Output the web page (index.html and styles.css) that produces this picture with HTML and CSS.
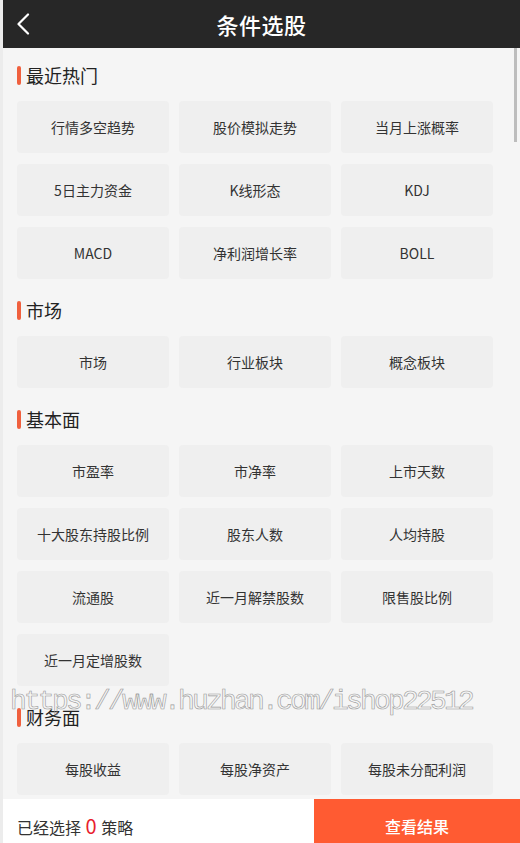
FILE: index.html
```html
<!DOCTYPE html>
<html>

	<head lang="en">
		<meta charset="UTF-8">
		<title>条件选股</title>
		<meta name="viewport" content="width=device-width,initial-scale=1,minimum-scale=1,maximum-scale=1,user-scalable=no" />
		<link rel="stylesheet" href="styles.css">
	</head>

	<body>
		<div class="page">
			<!-- 顶部标题栏 -->
			<div class="header">
				<a class="back" href="javascript:;">
					<svg width="14" height="22" viewBox="0 0 14 22"><path d="M12 1.5 L2.5 11 L12 20.5" fill="none" stroke="#fff" stroke-width="2.2" stroke-linecap="round" stroke-linejoin="round"/></svg>
				</a>
				<div class="title">条件选股</div>
			</div>

			<!-- 条件列表 -->
			<div class="content">
				<div class="section first">
					<div class="sec-title">最近热门</div>
					<div class="item-grid">
						<div class="item">行情多空趋势</div>
						<div class="item">股价模拟走势</div>
						<div class="item">当月上涨概率</div>
						<div class="item">5日主力资金</div>
						<div class="item">K线形态</div>
						<div class="item">KDJ</div>
						<div class="item">MACD</div>
						<div class="item">净利润增长率</div>
						<div class="item">BOLL</div>
					</div>
				</div>

				<div class="section">
					<div class="sec-title">市场</div>
					<div class="item-grid">
						<div class="item">市场</div>
						<div class="item">行业板块</div>
						<div class="item">概念板块</div>
					</div>
				</div>

				<div class="section">
					<div class="sec-title">基本面</div>
					<div class="item-grid">
						<div class="item">市盈率</div>
						<div class="item">市净率</div>
						<div class="item">上市天数</div>
						<div class="item">十大股东持股比例</div>
						<div class="item">股东人数</div>
						<div class="item">人均持股</div>
						<div class="item">流通股</div>
						<div class="item">近一月解禁股数</div>
						<div class="item">限售股比例</div>
						<div class="item">近一月定增股数</div>
					</div>
				</div>

				<div class="section">
					<div class="sec-title">财务面</div>
					<div class="item-grid">
						<div class="item">每股收益</div>
						<div class="item">每股净资产</div>
						<div class="item">每股未分配利润</div>
						<div class="item">每股公积金</div>
						<div class="item">每股现金流</div>
						<div class="item">营业收入</div>
						<div class="item">净利润</div>
						<div class="item">毛利率</div>
						<div class="item">净资产收益率</div>
					</div>
				</div>

				<div class="section">
					<div class="sec-title">技术面</div>
					<div class="item-grid">
						<div class="item">MACD</div>
						<div class="item">KDJ</div>
						<div class="item">BOLL</div>
						<div class="item">RSI</div>
						<div class="item">WR</div>
						<div class="item">CCI</div>
						<div class="item">均线</div>
						<div class="item">成交量</div>
						<div class="item">换手率</div>
					</div>
				</div>

				<div class="section">
					<div class="sec-title">资金面</div>
					<div class="item-grid">
						<div class="item">5日主力资金</div>
						<div class="item">主力净流入</div>
						<div class="item">北向资金</div>
						<div class="item">融资余额</div>
						<div class="item">大单净额</div>
						<div class="item">龙虎榜</div>
					</div>
				</div>
			</div>

			<!-- 滚动条 -->
			<div class="scroll-thumb"></div>

			<!-- 底部操作栏 -->
			<div class="footer">
				<div class="selected">已经选择 <span class="num">0</span> 策略</div>
				<div class="btn-result">查看结果</div>
			</div>

			<div class="watermark">https://www.huzhan.com/ishop22512</div>
		</div>
	</body>

</html>
```

FILE: styles.css
```css
*{
	padding: 0;
	margin: 0;
	box-sizing: border-box;
}
html,body{
	height: 100%;
	overflow: hidden;
}
body{
	font-family: "Noto Sans CJK SC", "Liberation Sans", sans-serif;
	color: #333;
	background: #ececec;
}
a{
	text-decoration: none;
}

.page{
	position: relative;
	height: 100%;
	margin-left: 3px;
	display: flex;
	flex-direction: column;
	background: #f5f5f5;
}

/* 标题栏 */
.header{
	height: 48px;
	flex-shrink: 0;
	background: #272727;
	display: flex;
	align-items: center;
	justify-content: center;
	position: relative;
}
.header .back{
	position: absolute;
	left: 13px;
	top: 13px;
	display: block;
	width: 14px;
	height: 22px;
}
.header .back svg{
	display: block;
}
.header .title{
	font-size: 22px;
	font-weight: 500;
	color: #fff;
	letter-spacing: 0.5px;
}

/* 列表区 */
.content{
	flex: 1;
	overflow-y: auto;
	padding: 0 0 10px 14px;
}
.content::-webkit-scrollbar{
	display: none;
}
.scroll-thumb{
	position: absolute;
	right: 3px;
	top: 48px;
	width: 3px;
	height: 94px;
	background: #bdbdbd;
}

.section{
	padding-top: 18px;
}
.section.first{
	padding-top: 14px;
}
.sec-title{
	position: relative;
	height: 26px;
	line-height: 26px;
	font-size: 18px;
	color: #222;
	padding-left: 9px;
	margin-bottom: 13px;
}
.sec-title:before{
	content: '';
	position: absolute;
	left: 0;
	top: 4px;
	width: 4px;
	height: 19px;
	border-radius: 2px;
	background: #f0603e;
}

.item-grid{
	display: grid;
	grid-template-columns: repeat(3, 152px);
	gap: 11px 10px;
}
.item{
	height: 52px;
	line-height: 52px;
	text-align: center;
	font-size: 14px;
	color: #333;
	background: #efefef;
	border-radius: 4px;
	white-space: nowrap;
	overflow: hidden;
	text-overflow: ellipsis;
}

/* 底部栏 */
.footer{
	height: 44px;
	flex-shrink: 0;
	display: flex;
	background: #fff;
	position: relative;
	z-index: 1;
}
.footer .selected{
	flex: 1;
	padding: 10px 0 0 14px;
	line-height: 34px;
	font-size: 16px;
	color: #333;
}
.footer .num{
	font-size: 20px;
	color: #e8202c;
	margin: 0 1px;
}
.footer .btn-result{
	width: 206px;
	padding-top: 10px;
	line-height: 34px;
	text-align: center;
	font-size: 16px;
	font-weight: 500;
	color: #fff;
	background: #ff5b32;
}

/* 水印 */
.watermark{
	position: absolute;
	left: 7px;
	top: 688px;
	font-family: "Liberation Mono", monospace;
	font-size: 28px;
	line-height: 28px;
	letter-spacing: -2.8px;
	color: transparent;
	-webkit-text-stroke: 0.6px #9a9a9a;
	white-space: nowrap;
	pointer-events: none;
	z-index: 2;
}
```
